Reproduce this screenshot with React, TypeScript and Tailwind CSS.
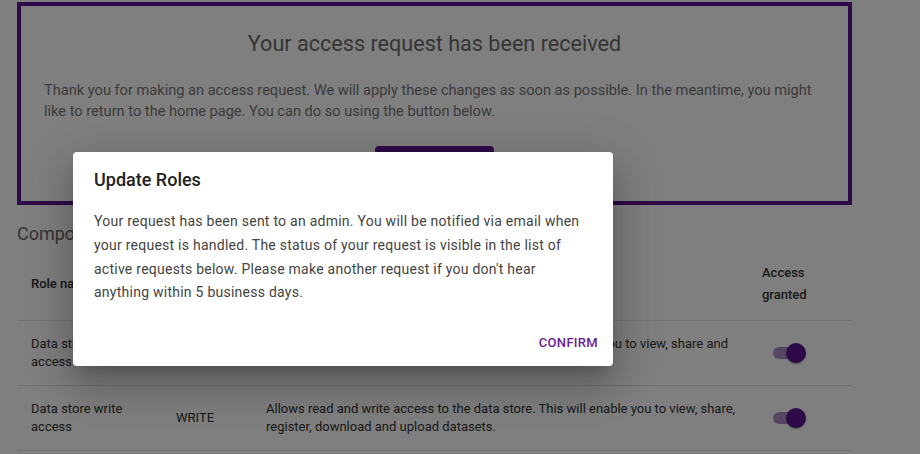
const ROWS = [
  {
    name: 'Data store read access',
    level: 'READ',
    description:
      'Allows read only access to the data store. This will enable you to view, share and download datasets.',
  },
  {
    name: 'Data store write access',
    level: 'WRITE',
    description:
      'Allows read and write access to the data store. This will enable you to view, share, register, download and upload datasets.',
  },
]

function Toggle() {
  return (
    <div className="relative ml-[11px] h-5 w-[33px]">
      <div className="absolute left-0 top-[4px] h-[12px] w-[30px] rounded-full bg-[#5c1690]/50" />
      <div className="absolute right-0 top-0 h-5 w-5 rounded-full bg-[#5c1690] shadow-[0_2px_1px_-1px_rgba(0,0,0,0.2),0_1px_1px_0_rgba(0,0,0,0.14),0_1px_3px_0_rgba(0,0,0,0.12)]" />
    </div>
  )
}

export default function App() {
  return (
    <div className="relative h-[454px] w-[920px] overflow-hidden bg-white font-['Roboto',sans-serif]">
      {/* Page underneath */}
      <div className="ml-[17px] w-[835px] pt-[2px]">
        <section className="border-4 border-[#5c1690] px-[23px] pb-[19px] pt-[22px]">
          <h1 className="text-center text-[21.6px] leading-[32px] text-[#6b6b6b]">
            Your access request has been received
          </h1>
          <p className="mt-[20px] text-[14.6px] leading-[21px] text-[#767676]">
            Thank you for making an access request. We will apply these changes as soon as possible. In the meantime, you might like to return to the home page. You can do so using the button below.
          </p>
          <div className="mt-[24px] flex justify-center">
            <button className="h-9 w-[119px] rounded bg-[#5c1690] text-sm font-medium uppercase text-white">
              Home
            </button>
          </div>
        </section>

        <h2 className="mt-[17px] text-[18px] leading-6 text-[#6b6b6b]">Component roles</h2>

        <div className="mt-[3px] text-[13px] text-[#333]">
          <div className="grid grid-cols-[145px_90px_500px_100px] border-b border-[#e0e0e0] font-medium leading-[22px]">
            <div className="flex items-center px-[14px] pb-[14px] pt-[13px]">Role name</div>
            <div className="flex items-center px-[14px] pb-[14px] pt-[13px]">Level</div>
            <div className="flex items-center px-[14px] pb-[14px] pt-[13px]">Description</div>
            <div className="pb-[14px] pl-[10px] pt-[13px]">
              Access
              <br />
              granted
            </div>
          </div>
          {ROWS.map((row) => (
            <div
              key={row.name}
              className="grid grid-cols-[145px_90px_500px_100px] border-b border-[#e0e0e0] leading-[18px]"
            >
              <div className="flex items-center px-[14px] py-[14px]">{row.name}</div>
              <div className="flex items-center px-[14px] py-[14px]">{row.level}</div>
              <div className="flex items-center py-[14px] pl-[14px] pr-[4px]">{row.description}</div>
              <div className="flex items-center py-[14px] pl-[10px]">
                <Toggle />
              </div>
            </div>
          ))}
        </div>
      </div>

      {/* Backdrop */}
      <div className="absolute inset-0 bg-black/50" />

      {/* Dialog */}
      <div className="absolute left-[73px] top-[152px] flex h-[214px] w-[540px] flex-col rounded bg-white shadow-[0_11px_15px_-7px_rgba(0,0,0,0.2),0_24px_38px_3px_rgba(0,0,0,0.14),0_9px_46px_8px_rgba(0,0,0,0.12)]">
        <h3 className="px-[21px] pt-[14px] text-[18px] font-medium leading-[28px] text-[#222]">
          Update Roles
        </h3>
        <p className="mt-[16px] px-[21px] text-[14px] leading-[1.7] tracking-[0.25px] text-[#444]">
          Your request has been sent to an admin. You will be notified via email when your request is handled. The status of your request is visible in the list of active requests below. Please make another request if you don&apos;t hear anything within 5 business days.
        </p>
        <div className="mt-auto flex justify-end px-[7px] pb-[5px]">
          <button className="h-9 px-2 text-[13px] font-medium uppercase tracking-[0.3px] text-[#6a1b9a]">
            Confirm
          </button>
        </div>
      </div>
    </div>
  )
}
